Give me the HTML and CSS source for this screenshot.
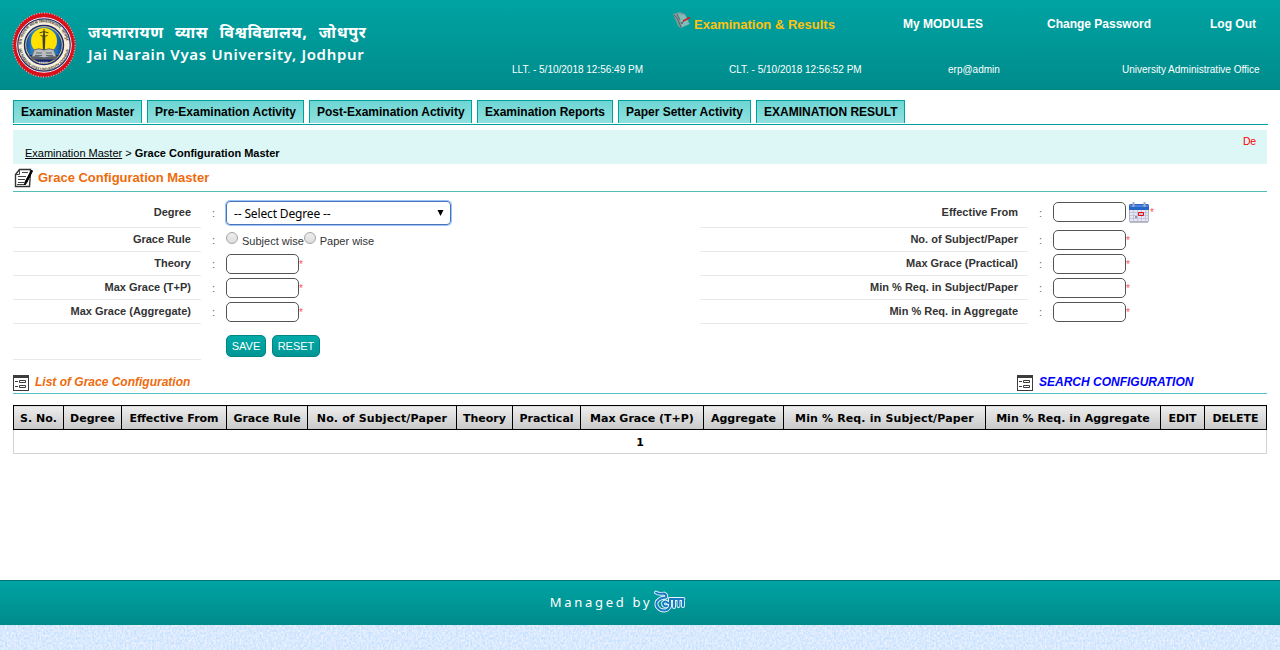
FILE: index.html
```html
<!DOCTYPE html>
<html lang="en">
<head>
<meta charset="utf-8">
<title>Grace Configuration Master</title>
<link rel="stylesheet" href="styles.css">
</head>
<body>
<svg class="defs" width="0" height="0">
  <symbol id="form-icon" viewBox="0 0 16 16">
    <rect x=".5" y=".5" width="15" height="15" fill="#fff" stroke="#3c3c3c"/>
    <path fill="#3c3c3c" d="M0 0h13v3H0zM0 0h16v3H0zM2 6h3v1H2zM2 11h3v1H2z"/>
    <path fill="none" stroke="#3c3c3c" d="M6.500 5.500h6v2h-6zM6.500 10.500h6v2h-6z"/>
  </symbol>
</svg>
<header class="header">
  <div class="brand">
    <svg class="seal" viewBox="0 0 64 66">
      <defs>
        <path id="rim-top" d="M9.500 33a22.500 22.500 0 0 1 45 0"/>
        <path id="rim-bottom" d="M6.500 33a25.500 25.500 0 0 0 51 0"/>
        <linearGradient id="sky" x1="0" x2="1"><stop offset="0" stop-color="#0a3c90"/><stop offset=".2" stop-color="#2a86c8"/><stop offset=".8" stop-color="#2476bb"/><stop offset="1" stop-color="#083a90"/></linearGradient>
      </defs>
      <ellipse cx="32" cy="33" rx="31.300" ry="32.300" fill="#d8101c"/>
      <ellipse cx="32" cy="33" rx="31" ry="32" fill="none" stroke="#f3b5ac" stroke-width="1.300" stroke-dasharray=".9 1.700"/>
      <circle cx="32" cy="33" r="27.200" fill="#f7efd8" stroke="#fff" stroke-width="1"/>
      <circle cx="32" cy="33" r="26.200" fill="none" stroke="#252a70" stroke-width="1.200"/>
      <text class="rim-text"><textPath href="#rim-top" textLength="66">जय नारायण व्यास विश्वविद्यालय, जोधपुर</textPath></text>
      <text class="rim-text rim-en"><textPath href="#rim-bottom" startOffset="4" textLength="71">JAI NARAIN VYAS UNIVERSITY JODHPUR</textPath></text>
      <circle cx="32" cy="33" r="19.500" fill="url(#sky)" stroke="#1c286e" stroke-width="1.400"/>
      <path d="M16 43a19 19 0 0 0 32 0z" fill="#14266e"/>
      <circle cx="32" cy="33" r="18.300" fill="none" stroke="#e9c46b"/>
      <circle cx="32" cy="29" r="13" fill="#ffe000"/>
      <path d="M31.300 20h1.400l.6 6-.4 11h2l1 3h-8l1-3h2l-.4-11z" fill="#45401c"/>
      <path d="M27.500 21q4.500-3 9 0M28.500 23.500q3.500 2 7 0M32 17v4" fill="none" stroke="#45401c"/>
      <path d="M22 38q5-2.500 10 0 5-2.500 10 0l2.500 7q-7-1-12.500 1-5.500-2-12.500-1z" fill="#b6bcc0" stroke="#4d535b" stroke-width=".8"/>
      <path d="M24 41h6m4 0h6M23 43.500h7m4 0h7" stroke="#4a525b" stroke-width=".8"/>
      <path d="M19.500 45q7-1 12.500 1.200 5.500-2.200 12.500-1.200v2.500h-25z" fill="#5b6068"/>
      <path d="M27 50.500h9" stroke="#d9dbe9" stroke-width="1.600" stroke-dasharray="1.400 .7"/>
    </svg>
    <div class="names">
      <div class="name-hi" lang="hi">जयनारायण व्यास विश्वविद्यालय, जोधपुर</div>
      <div class="name-en">Jai Narain Vyas University, Jodhpur</div>
    </div>
  </div>
  <div class="header-right">
    <nav class="top-nav">
      <a class="module"><svg class="exam-icon" viewBox="0 0 18 17"><path d="M0 2 7 0l5 2 5 10-9 4-3-2z" fill="#7e9a9b"/><path d="M5 2l7 1 4 9-7 3z" fill="#80bcba"/><path d="M1 3l3 3 4 9M4 2l3 6m1 2 1 2 2-4" fill="none" stroke="#5b6262"/><path d="M10 9l2-1 5-2.500" fill="none" stroke="#df1818" stroke-width="1.400"/></svg><span>Examination &amp; Results</span></a>
      <a>My MODULES</a><a>Change Password</a><a>Log Out</a>
    </nav>
    <div class="session"><span>LLT. - 5/10/2018 12:56:49 PM</span><span>CLT. - 5/10/2018 12:56:52 PM</span><span>erp@admin</span><span>University Administrative Office</span></div>
  </div>
</header>
<main class="main">
  <nav class="tabs"><a class="w129">Examination Master</a><a class="w157">Pre-Examination Activity</a><a class="w163">Post-Examination Activity</a><a class="w136">Examination Reports</a><a class="w133">Paper Setter Activity</a><a class="w149">EXAMINATION RESULT</a></nav>
  <div class="crumbs"><div><a>Examination Master</a> &gt; <b>Grace Configuration Master</b></div><div class="ticker">De</div></div>
  <h1 class="title"><svg width="20" height="20" viewBox="0 0 20 20"><path d="M5.500 1.500h11v3l-1 14H1.500v-12z" fill="#fff" stroke="#333" stroke-width="1.400"/><path d="M5.500 1.500v5h-4M8 4.500h6M4 8.500h8M4 11.500h7M4 14.500h6M3 16.500h9" fill="none" stroke="#444"/><path d="M17.500 2 11 14l-.5 3 2-2L18.500 3z" fill="#000" stroke="#000"/></svg><span>Grace Configuration Master</span></h1>
  <form class="form">
    <div class="col left">
      <div class="row first"><label>Degree</label><i>:</i><div class="field"><div class="select"><span>-- Select Degree --</span><svg width="7" height="6"><path d="M.5 0h6L3.500 6z"/></svg></div></div></div>
      <div class="row"><label>Grace Rule</label><i>:</i><div class="field radios"><em></em><span>Subject wise</span><em></em><span>Paper wise</span></div></div>
      <div class="row"><label>Theory</label><i>:</i><div class="field"><input class="box"><b>*</b></div></div>
      <div class="row"><label>Max Grace (T+P)</label><i>:</i><div class="field"><input class="box"><b>*</b></div></div>
      <div class="row"><label>Max Grace (Aggregate)</label><i>:</i><div class="field"><input class="box"><b>*</b></div></div>
      <div class="row actions"><label></label><i></i><div class="field"><button type="button" class="save">SAVE</button><button type="button" class="reset">RESET</button></div></div>
    </div>
    <div class="col right">
      <div class="row first"><label>Effective From</label><i>:</i><div class="field"><input class="box"><svg class="cal" width="20" height="21" viewBox="0 0 20 21"><path d="M1 20h18" stroke="#bbb" stroke-width="2"/><path d="M.5 7h19v12.500H.5z" fill="#e6e6f4" stroke="#b2b2cc"/><path d="M1 10.500h18M1 13.500h18M1 16.500h18M4.500 8v11M8.500 8v11M12.500 8v11M16.500 8v11" stroke="#c6c6da"/><path d="M0 3.500Q0 2 1.500 2h17Q20 2 20 3.500V8H0z" fill="#2865c8"/><path d="M1 4h18" stroke="#568fe0" stroke-width="1.500"/><path d="M4.500 0v5m11-5v5" stroke="#a6a9c8" stroke-width="2"/><path d="M9.500 10.500h5v3h-5z" fill="#c3c3dd" stroke="#e80808"/><path d="M6 14h2v2H6z" fill="#9292b8"/></svg><b>*</b></div></div>
      <div class="row"><label>No. of Subject/Paper</label><i>:</i><div class="field"><input class="box"><b>*</b></div></div>
      <div class="row"><label>Max Grace (Practical)</label><i>:</i><div class="field"><input class="box"><b>*</b></div></div>
      <div class="row"><label>Min % Req. in Subject/Paper</label><i>:</i><div class="field"><input class="box"><b>*</b></div></div>
      <div class="row"><label>Min % Req. in Aggregate</label><i>:</i><div class="field"><input class="box"><b>*</b></div></div>
    </div>
  </form>
  <div class="list-head"><div class="list-title"><svg width="16" height="16"><use href="#form-icon"/></svg><span>List of Grace Configuration</span></div><div class="list-title search"><svg width="16" height="16"><use href="#form-icon"/></svg><span>SEARCH CONFIGURATION</span></div></div>
  <table class="grid">
    <colgroup><col width="50"><col width="58"><col width="105"><col width="81"><col width="149"><col width="56"><col width="68"><col width="123"><col width="80"><col width="202"><col width="175"><col width="44"><col width="62"></colgroup>
    <thead><tr><th>S. No.</th><th>Degree</th><th>Effective From</th><th>Grace Rule</th><th class="wide">No. of Subject/Paper</th><th>Theory</th><th>Practical</th><th>Max Grace (T+P)</th><th>Aggregate</th><th class="wide">Min % Req. in Subject/Paper</th><th>Min % Req. in Aggregate</th><th>EDIT</th><th>DELETE</th></tr></thead>
    <tbody><tr><td colspan="13">1</td></tr></tbody>
  </table>
</main>
<footer class="footer"><span>Managed by</span><svg width="32" height="24" viewBox="0 0 32 24"><g fill="none" stroke-linecap="round" stroke-linejoin="round"><g stroke="#e8f6ff" stroke-width="3.800"><path d="M2 2.500q3 2 8 1 3 1 2 4-6 0-9 4-2 5 3 8 7 3 10-3V9M14 13q-3-3-5 0 0 4 4 3"/><path d="M16 9h13.500M20 9v8M24.500 9v7M29 9v7"/></g><g stroke="#1978bd" stroke-width="2"><path d="M2 2.500q3 2 8 1 3 1 2 4-6 0-9 4-2 5 3 8 7 3 10-3V9M14 13q-3-3-5 0 0 4 4 3"/><path d="M16 9h13.500M20 9v8M24.500 9v7M29 9v7"/></g></g></svg></footer>
<svg class="paper" width="1280" height="25"><filter id="grain" x="0" y="0" width="100%" height="100%" color-interpolation-filters="sRGB"><feTurbulence type="fractalNoise" baseFrequency=".55 .4" numOctaves="2" seed="4"/><feColorMatrix values=".32 0 0 0 .69  .14 0 0 0 .845  0 0 0 0 .995  0 0 0 0 1"/></filter><rect width="1280" height="25" filter="url(#grain)"/></svg>
</body>
</html>
```
FILE: styles.css
```css
* { box-sizing: border-box; }
body { margin: 0; background: #fff; font: 11px "Liberation Sans", Arial, sans-serif; color: #333; overflow: hidden; }
.defs { display: block; height: 0; }
.header { height: 90px; display: flex; background: linear-gradient(#00a3a3, #008b8b); color: #fff; }
.brand { width: 512px; display: flex; padding: 12px 0 0 12px; }
.seal { width: 64px; height: 66px; }
.rim-text { font: bold 4.200px "Noto Sans", sans-serif; fill: #55524c; }
.rim-en { font-size: 3.800px; }
.names { padding: 14px 0 0 12px; white-space: nowrap; }
.name-hi { font: bold 16px/18px "Noto Sans Devanagari", "Noto Sans", sans-serif; letter-spacing: .6px; word-spacing: 6.500px; }
.name-en { font: 600 15px/20px "Noto Sans", sans-serif; letter-spacing: .67px; }
.header-right { flex: 1; white-space: nowrap; }
.top-nav { display: grid; grid-template-columns: 230px 144px 163px 1fr; margin-left: 161px; padding-top: 12px; height: 63px; font: bold 12px/24px "Liberation Sans", Arial, sans-serif; }
.module { display: flex; color: #ffc20e; font-size: 13px; line-height: 25px; }
.exam-icon { width: 18px; height: 17px; margin-right: 3px; }
.session { display: grid; grid-template-columns: 217px 219px 174px 1fr; font-size: 10px; line-height: 14px; }
.main { height: 490px; padding: 10px 13px 0; }
.tabs { display: flex; gap: 5px; height: 25px; margin-right: -1px; border-bottom: 1px solid #00a09c; }
.tabs a { height: 23px; padding-left: 7px; border: 1px solid #00a09c; border-bottom: 0; background: linear-gradient(#6dd6d4, #90e1df); color: #000; font: bold 12px/22px "Liberation Sans", Arial, sans-serif; white-space: nowrap; }
.w129 { width: 129px; } .w157 { width: 157px; } .w163 { width: 163px; } .w136 { width: 136px; } .w133 { width: 133px; } .w149 { width: 149px; }
.crumbs { margin-top: 5px; height: 34px; padding: 17px 12px 0; display: flex; justify-content: space-between; background: #ddf7f7; color: #000; line-height: 13px; }
.crumbs a { text-decoration: underline; }
.ticker { width: 12px; margin-top: -12px; color: #f00; font-size: 10.500px; letter-spacing: -.4px; }
.title { margin: 0; height: 28px; display: flex; border-bottom: 1px solid #51bcb9; color: #ed6b0c; font: bold 13px/27px "Liberation Sans", Arial, sans-serif; }
.title svg { margin: 4px 4px 0 1px; }
.form { display: flex; height: 177px; }
.left { width: 687px; }
.right { flex: 1; }
.row { display: flex; height: 24px; }
.row.first { height: 36px; }
.row.actions { height: 36px; }
.row label { width: 188px; padding-right: 10px; border-bottom: 1px solid #e9e9e9; font-weight: bold; line-height: 22px; text-align: right; }
.right .row label { width: 328px; }
.row.first label { line-height: 41px; }
.row i { width: 25px; padding-left: 11px; font-style: normal; line-height: 25px; color: #666; }
.row.first i { line-height: 42px; }
.field { display: flex; align-items: flex-start; padding-top: 2px; }
.first .field { padding-top: 10px; }
.left .first .field { padding-top: 9px; }
.box { display: block; width: 73px; height: 20px; padding: 0; border: 1px solid #555; border-radius: 5px; background: #fff; }
.field b { color: #f65353; font: 10px/21px "Liberation Sans", Arial, sans-serif; }
.cal { margin: 0 1px 0 3px; }
.select { width: 225px; height: 24px; display: flex; align-items: center; justify-content: space-between; padding: 1px 6px 0 7px; border: 1px solid #4775b5; border-radius: 4px; box-shadow: 0 0 0 1px #9bc3fa; color: #000; font: 12px/20px "Noto Sans", sans-serif; letter-spacing: -.15px; }
.select svg { margin-top: -2px; }
.radios { line-height: 23px; }
.radios em { width: 12px; height: 12px; margin: 2px 4px 0 0; border: 1px solid #a5a5a5; border-radius: 50%; background: linear-gradient(#eee, #ddd); }
.field button { height: 22px; padding: 0; border: 1px solid #008583; border-radius: 5px; background: linear-gradient(#00aaa8, #009795); color: #fff; font: 11px/20px "Liberation Sans", Arial, sans-serif; }
.actions .field { padding-top: 11px; gap: 6px; }
.save { width: 40px; } .reset { width: 48px; }
.list-head { display: flex; height: 25px; border-bottom: 1px solid #51c2c2; }
.list-title { width: 1004px; display: flex; gap: 6px; color: #ed6b0c; font: italic bold 12px/27px "Liberation Sans", Arial, sans-serif; white-space: nowrap; }
.list-title svg { margin-top: 6px; }
.search { width: auto; color: #00f; }
.grid { width: 1254px; margin-top: 11px; border-collapse: collapse; table-layout: fixed; color: #000; font: bold 11px/14px "DejaVu Sans", sans-serif; }
.grid th { height: 24px; padding: 2px 0 0; border: 1px solid #000; background: linear-gradient(#ededed, #c9c9c9); white-space: nowrap; }
.grid .wide { letter-spacing: .14px; }
.grid td { height: 24px; padding: 2px 0 0; border: 1px solid #d3d3d3; text-align: center; }
.footer { height: 45px; display: flex; justify-content: center; padding: 9px 44px 0 0; border-top: 1px solid #007777; background: linear-gradient(#00a3a3, #008b8b); color: #fff; }
.footer span { font: 13px/25px "Noto Sans", sans-serif; letter-spacing: 2.700px; }
.footer svg { margin: 0 0 0 2px; }
.paper { display: block; }
```
